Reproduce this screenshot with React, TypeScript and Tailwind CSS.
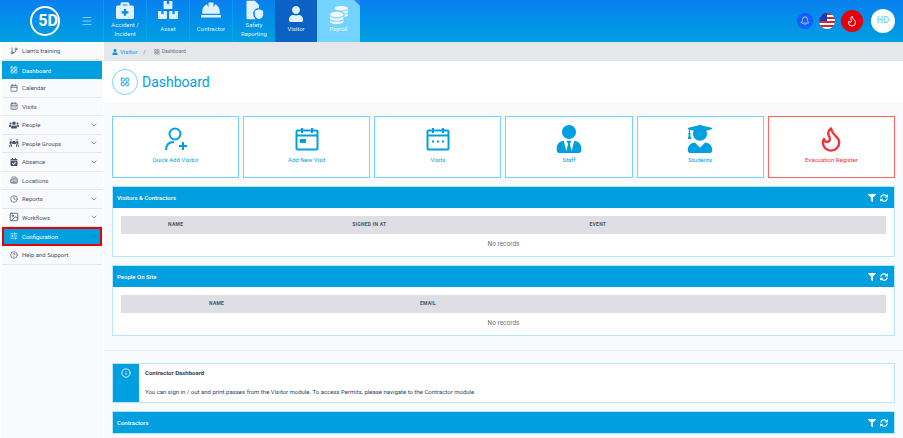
import {
  Bell,
  Building2,
  Calendar,
  CalendarDays,
  ChevronDown,
  CircleHelp,
  Clock,
  Flame,
  GitBranch,
  Image,
  LayoutGrid,
  Info,
  SlidersHorizontal,
  Menu,
} from "lucide-react";
import {
  FaBriefcaseMedical,
  FaBoxes,
  FaCalendarCheck,
  FaCoins,
  FaFilter,
  FaHardHat,
  FaSyncAlt,
  FaUser,
  FaUserGraduate,
  FaUsers,
  FaUserTie,
  FaPeopleCarry,
} from "react-icons/fa";

const modules = [
  { label: ["Accident /", "Incident"], icon: <FaBriefcaseMedical className="size-4.5" /> },
  { label: ["Asset"], icon: <FaBoxes className="size-5" /> },
  { label: ["Contractor"], icon: <FaHardHat className="size-5" /> },
  { label: ["Safety", "Reporting"], icon: <SafetyIcon /> },
];

const sideItems = [
  { label: "Calendar", icon: <Calendar className="size-2" /> },
  { label: "Visits", icon: <CalendarDays className="size-2" /> },
  { label: "People", icon: <FaUsers className="size-2.5" />, more: true },
  { label: "People Groups", icon: <FaPeopleCarry className="size-2.5" />, more: true },
  { label: "Absence", icon: <FaCalendarCheck className="size-2" />, more: true },
  { label: "Locations", icon: <Building2 className="size-2" /> },
  { label: "Reports", icon: <Clock className="size-2" />, more: true },
  { label: "Workflows", icon: <Image className="size-2.5" />, more: true },
];

function SafetyIcon() {
  return (
    <svg viewBox="0 0 24 24" className="size-5" fill="currentColor">
      <path d="M4 1h9l5 5v4a6 6 0 0 0-7 6c0 3 1 5 3 7H4a1 1 0 0 1-1-1V2a1 1 0 0 1 1-1z" />
      <path d="M18 11l5 2v4c0 3-2 5-5 6-3-1-5-3-5-6v-4z" />
    </svg>
  );
}

function CalendarIcon({ dots }: { dots?: boolean }) {
  return (
    <svg viewBox="0 0 24 24" className="size-6" fill="none" stroke="currentColor" strokeWidth={2}>
      <rect x="1.5" y="3.5" width="21" height="19" rx="1" />
      <path d="M1.5 8.5h21M7 1v5M17 1v5" />
      {dots ? (
        <path d="M6 14.5h2M11 14.5h2M16 14.5h2" />
      ) : (
        <rect x="5" y="12" width="6" height="4" fill="currentColor" stroke="none" />
      )}
    </svg>
  );
}

function ActionCard({ label, icon, red }: { label: string; icon: React.ReactNode; red?: boolean }) {
  return (
    <div
      className={`flex h-[62px] flex-col items-center border bg-white pt-2 ${
        red ? "border-red-400 text-red-500" : "border-sky-300 text-[#00a0e0]"
      }`}
    >
      <div className="flex h-7 items-center">{icon}</div>
      <span className="mt-1 text-[6px] leading-none">{label}</span>
    </div>
  );
}

function Panel({ title, children }: { title: string; children?: React.ReactNode }) {
  return (
    <div className="border border-sky-200 bg-white">
      <div className="flex h-[21px] items-center justify-between bg-[#00a0e0] px-1 text-white">
        <span className="text-[6px] font-medium">{title}</span>
        <div className="flex items-center gap-1 pr-0.5">
          <FaFilter className="size-2" />
          <FaSyncAlt className="size-2" />
        </div>
      </div>
      {children}
    </div>
  );
}

function RecordsTable({ grid, heads }: { grid: string; heads: string[] }) {
  return (
    <div className="px-2 pt-2">
      <div className={`grid h-[18px] items-center bg-[#dddfe3] text-[5px] font-bold tracking-wider text-gray-600 ${grid}`}>
        {heads.map((h) => (
          <span key={h} className="text-center">
            {h}
          </span>
        ))}
      </div>
      <p className="flex h-[22px] items-center justify-center text-[6.5px] text-gray-500">No records</p>
    </div>
  );
}

export default function App() {
  return (
    <div
      className="flex h-screen flex-col overflow-hidden bg-white"
      style={{ fontFamily: "Roboto, 'Liberation Sans', sans-serif" }}
    >
      <header className="flex h-[42px] shrink-0 bg-gradient-to-b from-[#0a7ff0] to-[#04a0e0] text-white">
        <div className="flex w-[103px] shrink-0 items-center justify-between pr-2.5 pl-7.5">
          <div className="flex size-7.5 items-center justify-center rounded-full border-2 border-white pl-1.5 text-base leading-none font-bold">
            5D
          </div>
          <Menu className="size-3 text-sky-300" />
        </div>
        {modules.map((m) => (
          <div
            key={m.label[0]}
            className="flex w-[43px] flex-col items-center border-l border-sky-400/40 pt-0.5 text-sky-100"
          >
            <div className="flex h-4 items-center">{m.icon}</div>
            <div className="flex h-[21px] flex-col justify-center text-center text-[6px] leading-[9px]">
              {m.label.map((l) => (
                <div key={l}>{l}</div>
              ))}
            </div>
          </div>
        ))}
        <div className="flex w-[42px] flex-col items-center bg-[#0b62c4] pt-1.5 text-sky-100">
          <FaUser className="size-4" />
          <span className="mt-1 text-[6px] leading-none">Visitor</span>
        </div>
        <div className="relative flex w-[43px] flex-col items-center bg-sky-300 pt-1.5 text-sky-50">
          <FaCoins className="size-4.5" />
          <span className="mt-0.5 text-[6px] leading-none">Payroll</span>
          <span className="absolute top-0 right-0 border-t-[6px] border-l-[6px] border-t-blue-500 border-l-transparent" />
        </div>
        <div className="ml-auto flex items-center pr-2">
          <div className="flex size-4 items-center justify-center rounded-full bg-blue-600">
            <Bell className="size-2.5 text-sky-200" />
          </div>
          <div className="ml-1.5 h-4 w-4 overflow-hidden rounded-full bg-[repeating-linear-gradient(180deg,#dc2626_0_2px,#ffffff_2px_4px)]">
            <div className="h-2 w-2 bg-blue-800" />
          </div>
          <div className="ml-1.5 flex size-[22px] items-center justify-center rounded-full bg-red-600">
            <Flame className="size-3" />
          </div>
          <div className="ml-2 flex size-6 items-center justify-center rounded-full bg-white text-[9px] font-medium text-sky-300">
            HD
          </div>
        </div>
      </header>

      <div className="flex min-h-0 flex-1">
        <aside className="ml-0.5 w-[100px] shrink-0 bg-gray-50 text-[6px] text-gray-600">
          <div className="flex h-[19px] items-center gap-0.5 border-b-2 border-gray-200 pl-1.5">
            <span className="flex w-3 justify-center">
              <GitBranch className="size-2" />
            </span>
            Liam's training
          </div>
          <div className="flex h-[18px] items-center gap-0.5 bg-[#00a0e0] pl-1.5 text-white">
            <span className="flex w-3 justify-center">
              <LayoutGrid className="size-2" />
            </span>
            Dashboard
          </div>
          {sideItems.map((s) => (
            <div key={s.label} className="flex h-[18.5px] items-center gap-0.5 border-b border-gray-200 pl-1.5">
              <span className="flex w-3 justify-center">{s.icon}</span>
              {s.label}
              {s.more && <ChevronDown className="mr-1 ml-auto size-2 text-gray-500" />}
            </div>
          ))}
          <div className="flex h-[18.5px] items-center gap-0.5 border-2 border-red-600 bg-[#00a0e0] pl-1 text-white">
            <span className="flex w-3 justify-center">
              <SlidersHorizontal className="size-2" />
            </span>
            Configuration
            <ChevronDown className="mr-0.5 ml-auto size-2 text-sky-700" />
          </div>
          <div className="flex h-[19px] items-center gap-0.5 border-b border-gray-200 pl-1.5">
            <span className="flex w-3 justify-center">
              <CircleHelp className="size-2" />
            </span>
            Help and Support
          </div>
        </aside>

        <main className="ml-0.5 min-w-0 flex-1 bg-gray-50">
          <div className="flex h-[19px] items-center gap-0.5 bg-gray-200 pl-2 text-[6px] text-gray-500">
            <FaUser className="size-1.5 text-[#00a0e0]" />
            <span className="text-[#00a0e0]">Visitor</span>
            <span className="ml-1">/</span>
            <LayoutGrid className="ml-1.5 size-1.5" />
            <span className="text-[5px]">Dashboard</span>
          </div>
          <div className="flex h-[43px] items-center gap-1 border-b border-gray-100 bg-white pl-2">
            <div className="flex size-[26px] items-center justify-center rounded-full border border-sky-300 text-[#00a0e0]">
              <LayoutGrid className="size-2.5" />
            </div>
            <h1 className="text-sm text-[#00a0e0]">Dashboard</h1>
          </div>

          <div className="space-y-2 border-b border-gray-200 px-2 pt-3 pb-3.5">
            <div className="grid grid-cols-6 gap-1">
              <ActionCard
                label="Quick Add Visitor"
                icon={
                  <svg viewBox="0 0 24 24" className="size-6" fill="none" stroke="currentColor" strokeWidth={2}>
                    <circle cx="11" cy="7" r="5.5" />
                    <path d="M2 23c0-5 3-8 8-8M15 19h8M19 15v8" />
                  </svg>
                }
              />
              <ActionCard label="Add New Visit" icon={<CalendarIcon />} />
              <ActionCard label="Visits" icon={<CalendarIcon dots />} />
              <ActionCard label="Staff" icon={<FaUserTie className="size-7" />} />
              <ActionCard label="Students" icon={<FaUserGraduate className="size-7" />} />
              <ActionCard label="Evacuation Register" icon={<Flame className="size-7" />} red />
            </div>
            <Panel title="Visitors & Contractors">
              <RecordsTable grid="grid-cols-[1.1fr_2.8fr_1.8fr_2fr]" heads={["NAME", "SIGNED IN AT", "EVENT", ""]} />
            </Panel>
            <Panel title="People On Site">
              <RecordsTable grid="grid-cols-[1.9fr_2.3fr_3.4fr]" heads={["NAME", "EMAIL", ""]} />
            </Panel>
          </div>

          <div className="space-y-2 px-2 pt-3">
            <div className="flex h-10 border border-sky-200 bg-white">
              <div className="flex w-[26px] justify-center bg-[#00a0e0] pt-1 text-white">
                <Info className="size-2.5" />
              </div>
              <div className="pt-1 pl-1.5 text-[6px] text-slate-700">
                <p className="font-bold">Contractor Dashboard</p>
                <p className="mt-2.5">
                  You can sign in / out and print passes from the Visitor module. To access Permits, please navigate to
                  the Contractor module
                </p>
              </div>
            </div>
            <Panel title="Contractors" />
          </div>
        </main>
      </div>
    </div>
  );
}
